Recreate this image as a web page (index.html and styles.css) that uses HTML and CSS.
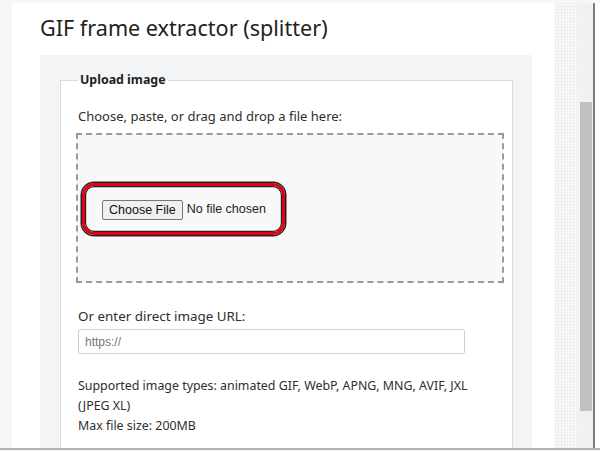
FILE: index.html
```html
<!DOCTYPE html>
<html lang="en">
<head>
<meta charset="utf-8">
<title>GIF frame extractor (splitter)</title>
<link rel="stylesheet" href="styles.css">
</head>
<body>
<div class="screen">
  <div class="edge-left"></div>
  <main class="page">
    <h1 class="title">GIF frame extractor (splitter)</h1>
    <section class="panel">
      <fieldset class="box">
        <legend class="legend">Upload image</legend>
        <p class="hint">Choose, paste, or drag and drop a file here:</p>
        <div class="dropzone">
          <div class="highlight">
            <span class="file-btn">Choose File</span><span class="no-file">No file chosen</span>
          </div>
        </div>
        <p class="label">Or enter direct image URL:</p>
        <div class="url-input">https://</div>
        <p class="info">Supported image types: animated GIF, WebP, APNG, MNG, AVIF, JXL<br>(JPEG XL)<br>Max file size: 200MB</p>
      </fieldset>
    </section>
  </main>
  <div class="grid-strip"></div>
  <div class="scrollbar"><div class="thumb"></div></div>
  <div class="frame-line"></div>
  <div class="edge-right"></div>
</div>
<div class="shadow"></div>
</body>
</html>
```

FILE: styles.css
```css
html, body {
  margin: 0;
  padding: 0;
}
body {
  background: #f7f7f7;
  width: 600px;
  height: 452px;
  overflow: hidden;
  font-family: "Noto Sans", "Open Sans", sans-serif;
  color: #2e2e2e;
}
.screen {
  margin-top: 3px;
  height: 445px;
  display: flex;
  overflow: hidden;
  background: #fff;
}
.edge-left {
  width: 12px;
  flex: none;
  background: #f6f6f6;
}
.page {
  width: 543px;
  flex: none;
  padding-left: 28px;
  box-sizing: border-box;
  background: #fff;
}
.title {
  margin: 0;
  padding-top: 10px;
  height: 52px;
  box-sizing: border-box;
  font-size: 21.6px;
  font-weight: 400;
  line-height: 30px;
  color: #222;
}
.panel {
  width: 492px;
  background: #f3f4f6;
  padding: 16px 19px 0 20px;
  box-sizing: border-box;
  height: 400px;
}
.box {
  margin: 0;
  background: #fff;
  border: 1px solid #dcdcdc;
  border-bottom: none;
  padding: 0 8px 0 17px;
  min-width: 0;
  height: 380px;
  box-sizing: border-box;
}
.legend {
  padding: 0 2px;
  font-size: 12.4px;
  font-weight: 700;
  line-height: 18px;
  color: #222;
}
.hint {
  margin: 18px 0 0;
  font-size: 13px;
  line-height: 18px;
}
.dropzone {
  margin: 8px 0 0 -2px;
  height: 150px;
  box-sizing: border-box;
  border: 2px dashed #9a9a9a;
  background: #f8f8f8;
  padding: 48px 0 0 4px;
}
.highlight {
  width: 203px;
  height: 52px;
  box-sizing: border-box;
  border: 3px solid #e3000f;
  border-radius: 12px;
  box-shadow: 0 0 0 1.5px #222, inset 0 0 0 1.2px #222;
  display: flex;
  align-items: center;
  padding-left: 17px;
  font-family: "Liberation Sans", Arial, sans-serif;
  font-size: 12.5px;
  color: #222;
}
.file-btn {
  display: inline-flex;
  align-items: center;
  height: 20px;
  box-sizing: border-box;
  padding: 0 6px;
  border: 1px solid #767676;
  border-radius: 2px;
  background: #efefef;
  color: #111;
  margin-top: 1px;
}
.no-file {
  margin-left: 4px;
}
.label {
  margin: 24px 0 0;
  font-size: 13.4px;
  line-height: 18px;
}
.url-input {
  margin-top: 4px;
  width: 387px;
  height: 25px;
  box-sizing: border-box;
  border: 1px solid #cfcfcf;
  border-radius: 2px;
  padding-left: 6px;
  display: flex;
  align-items: center;
  font-family: "Liberation Sans", Arial, sans-serif;
  font-size: 12px;
  color: #777;
}
.info {
  margin: 22px 0 0;
  font-size: 12.4px;
  line-height: 20px;
}
.grid-strip {
  width: 23px;
  flex: none;
  background-color: #fafafa;
  background-image:
    linear-gradient(to right, #efefef 1px, transparent 1px),
    linear-gradient(to bottom, #efefef 1px, transparent 1px);
  background-size: 3px 3px;
}
.scrollbar {
  width: 15px;
  flex: none;
  background: #f1f1f1;
  padding: 99px 1px 0 2px;
  box-sizing: border-box;
}
.thumb {
  height: 309px;
  background: #c1c1c1;
}
.frame-line {
  width: 2px;
  flex: none;
  background: #7d7d7d;
}
.edge-right {
  flex: 1;
  background: #fff;
}
.shadow {
  height: 2px;
  background: #b3b3b3;
}
```
